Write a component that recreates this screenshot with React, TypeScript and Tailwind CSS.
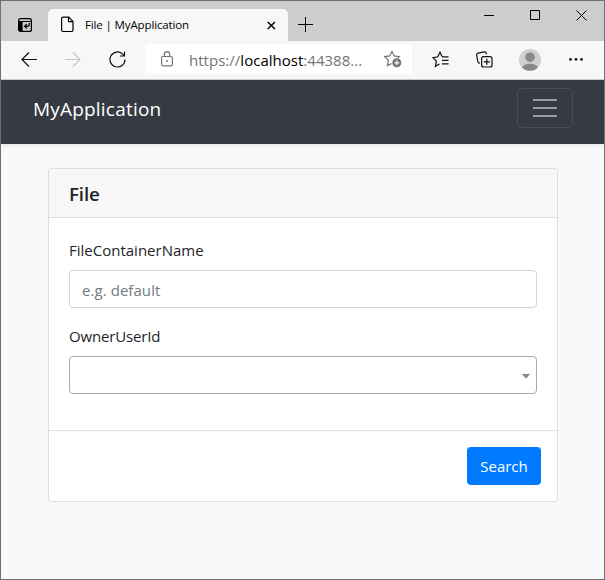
import type { ReactNode } from "react";

function Icon({ w, h, className = "", children }: { w: number; h: number; className?: string; children: ReactNode }) {
  return (
    <svg width={w} height={h} viewBox={`0 0 ${w} ${h}`} fill="none" stroke="currentColor" strokeWidth="1.2" className={`shrink-0 ${className}`}>
      {children}
    </svg>
  );
}

function TabStrip() {
  return (
    <div className="flex h-10 bg-[#cdcdcd] text-black">
      <Icon w={15} h={16} className="mt-4 ml-[17px]">
        <rect x="0.6" y="1.6" width="12.8" height="12.8" rx="2" />
        <path d="M1 4.5h12" strokeWidth="1" />
        <path d="M.6 4.5h4v10H2.4a2 2 0 0 1-1.8-2Z" fill="currentColor" stroke="none" />
        <path d="M11.3 6v1.4c0 1.2-.7 1.9-1.9 1.9H6.6M8.9 7 6.6 9.3l2.3 2.3" strokeWidth="1.2" />
      </Icon>
      <div className="mt-2 ml-[15px] flex h-8 w-[240px] shrink-0 rounded-t-[5px] bg-[#f7f7f7]">
        <Icon w={13} h={17} className="mt-[7px] ml-[13px]">
          <path d="M2 1.1h5.7L12 5.4V14a1.5 1.5 0 0 1-1.5 1.5H2A1.5 1.5 0 0 1 .6 14V2.5A1.5 1.5 0 0 1 2 1.1ZM7.5 1.3V5.6h4.3" />
        </Icon>
        <span className="mt-[7px] ml-[11px] w-[130px] text-[11.5px] leading-[18px] tracking-[-0.13px] whitespace-nowrap">File | MyApplication</span>
        <Icon w={10} h={10} className="mt-3 ml-[51px]">
          <path d="m1.7.9 7.2 7.2M8.9.9 1.7 8.1" strokeWidth="1.4" />
        </Icon>
      </div>
      <Icon w={15} h={15} className="mt-4 ml-[10px]">
        <path d="M7.5 0v15M0 7.5h15" strokeWidth="1" />
      </Icon>
      <Icon w={104} h={11} className="mt-[9px] ml-[170px]">
        <path d="M1 5.5h10M47.5.5h9v9h-9ZM93.5.5l10 10M103.5.5l-10 10" strokeWidth="1" />
      </Icon>
    </div>
  );
}

function Toolbar() {
  return (
    <div className="flex h-[39px] items-center border-b border-[#cdcdcd] bg-[#f7f7f7] pb-0.5 text-[#111]">
      <Icon w={16} h={15} className="ml-5">
        <path d="M16 7.5H.8M8 .5l-7 7 7 7" />
      </Icon>
      <Icon w={16} h={15} className="ml-7 text-[#c8c8c8]">
        <path d="M0 7.5h15.2M8 .5l7 7-7 7" />
      </Icon>
      <Icon w={17} h={17} className="ml-7">
        <path d="M16 8.5a7.5 7.5 0 1 1-2.5-5.6L15.5 5M15.5.5V5H11" />
      </Icon>
      <div className="ml-[19px] flex h-[30px] w-[267px] shrink-0 items-center rounded-[4px] bg-white text-[#747474]">
        <Icon w={12} h={16} className="ml-4">
          <rect x=".6" y="5.5" width="10.8" height="9.3" rx="1.5" />
          <path d="M3.3 5.5V3.3a2.7 2.7 0 0 1 5.4 0v2.2" />
          <circle cx="6" cy="10" r="1" fill="currentColor" stroke="none" />
        </Icon>
        <span className="mt-px ml-4 w-[174px] text-[15px] leading-5 tracking-[0.02px] whitespace-nowrap">
          https://<span className="text-black">localhost</span>:44388...
        </span>
        <Icon w={18} h={18} className="ml-[21px]">
          <path d="m8 1.2 2.2 4.7 5 .7-1.4 1.4M7.5 13.6 3.4 15.6l1-5.2L.8 6.6l5-.7L8 1.2" />
          <circle cx="12.8" cy="12.8" r="4.5" fill="currentColor" stroke="none" />
          <path d="M12.8 10.3v5M10.3 12.8h5" stroke="white" />
        </Icon>
      </div>
      <Icon w={17} h={17} className="ml-5">
        <path d="M10 5.5 8 1.2 5.8 5.8.9 6.6l3.5 3.7-1 5L7.5 13M10 5.9h6.5M10 9.4h6.5M10 12.9h6.5" />
      </Icon>
      <Icon w={17} h={17} className="ml-[27px]">
        <path d="M3.8 12.4C2 12 2 11.5 1.8 10.5L.7 4.1C.5 3 1 2.3 2 2.1L8.2.9c1-.2 1.8.3 2 1.3l.2 1.2" />
        <rect x="5.6" y="5.6" width="10.4" height="10.4" rx="2" />
        <path d="M10.8 7.8v6M7.8 10.8h6" />
      </Icon>
      <Icon w={22} h={22} className="mt-px ml-[26px]">
        <circle cx="11" cy="11" r="11" fill="#d2d0ce" stroke="none" />
        <circle cx="11" cy="8.2" r="4.8" fill="#8a8886" stroke="none" />
        <path d="M3.2 18.5c1.7-5 13.9-5 15.6 0a11 11 0 0 1-15.6 0Z" fill="#8a8886" stroke="none" />
      </Icon>
      <Icon w={14} h={3} className="mt-px ml-7">
        <path d="M1.5 0a1.4 1.4 0 1 1 0 2.8 1.4 1.4 0 0 1 0-2.8M7 0a1.4 1.4 0 1 1 0 2.8A1.4 1.4 0 0 1 7 0M12.5 0a1.4 1.4 0 1 1 0 2.8 1.4 1.4 0 0 1 0-2.8" fill="currentColor" stroke="none" />
      </Icon>
    </div>
  );
}

export default function App() {
  return (
    <div className="relative flex h-[580px] w-[605px] flex-col overflow-hidden border border-[#707070] bg-[#f8f9fb] font-['Open_Sans','Noto_Sans',sans-serif]">
      <TabStrip />
      <Toolbar />
      <nav className="flex h-16 shrink-0 items-start justify-between bg-[#363a42] pr-[31px] pl-8 shadow-[0_2px_4px_rgba(0,0,0,0.07)]">
        <span className="mt-[14px] text-[19px] leading-[30px] tracking-[0.2px] text-white">MyApplication</span>
        <button className="mt-2 flex h-10 w-14 items-center justify-center rounded-[4px] border border-[#4a4e55]">
          <Icon w={24} h={18} className="text-[#9b9da1]">
            <path d="M0 1h24M0 9h24M0 17h24" strokeWidth="2" />
          </Icon>
        </button>
      </nav>
      <main className="mt-6 ml-[47px] h-[334px] w-[510px] shrink-0 rounded-[3px] border border-[#dcdee1] bg-white text-[15px] text-[#212529]">
        <header className="flex h-[49px] items-center rounded-t-[3px] border-b border-[#dcdcdd] bg-[#f7f7f7] px-5 pt-0.5">
          <h1 className="text-[18.7px] leading-6 font-semibold tracking-[-0.1px]">File</h1>
        </header>
        <div className="h-[212px] px-5 pt-5">
          <label className="block h-8 leading-6">FileContainerName</label>
          <input className="block h-[38px] w-[468px] rounded-[4px] border border-[#ced4da] pt-0.5 pl-3 tracking-[0.06px] placeholder:text-[#757b82]" placeholder="e.g. default" />
          <label className="mt-4 block h-8 leading-6 tracking-[-0.15px]">OwnerUserId</label>
          <div className="flex h-[38px] w-[468px] items-center justify-end rounded-[4px] border border-[#aaa] pt-[3px] pr-1.5">
            <Icon w={8} h={5} className="text-[#888]">
              <path d="M0 0h8L4 4.7Z" fill="currentColor" stroke="none" />
            </Icon>
          </div>
        </div>
        <footer className="flex h-[71px] justify-end border-t border-[#dcdfe3] pt-4 pr-4">
          <button className="h-[38px] w-[74px] rounded-[4px] bg-[#007bff] text-white">Search</button>
        </footer>
      </main>
      <div className="absolute -bottom-px left-[102px] h-px w-[173px] bg-[repeating-linear-gradient(90deg,#1c2420_0_3px,#707070_3px_5px,#283230_5px_7px,#707070_7px_12px)]" />
    </div>
  );
}
